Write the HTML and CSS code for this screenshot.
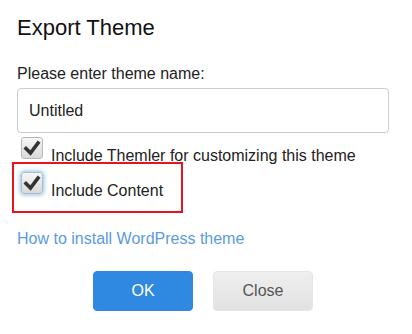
FILE: index.html
```html
<!DOCTYPE html>
<html lang="en">
<head>
    <meta charset="UTF-8">
    <title>Export Theme</title>
    <link rel="stylesheet" href="styles.css">
</head>
<body>
    <div class="dialog">
        <h2 class="title">Export Theme</h2>
        <div class="label">Please enter theme name:</div>
        <input class="name-input" type="text" value="Untitled">
        <div class="check-row">
            <span class="check">
                <svg viewBox="0 0 22 22" width="22" height="22"><path d="M5 11.5 L9.5 16 L17 6" fill="none" stroke="#333" stroke-width="3.6" stroke-linecap="square" stroke-linejoin="miter"/></svg>
            </span>
            <span class="check-text">Include Themler for customizing this theme</span>
        </div>
        <div class="check-row">
            <span class="check focused">
                <svg viewBox="0 0 22 22" width="22" height="22"><path d="M5 11.5 L9.5 16 L17 6" fill="none" stroke="#333" stroke-width="3.6" stroke-linecap="square" stroke-linejoin="miter"/></svg>
            </span>
            <span class="check-text">Include Content</span>
        </div>
        <a class="help-link" href="#">How to install WordPress theme</a>
        <div class="buttons">
            <button class="btn btn-ok">OK</button>
            <button class="btn btn-close">Close</button>
        </div>
        <div class="highlight"></div>
    </div>
</body>
</html>
```

FILE: styles.css
```css
body {
    margin: 0;
    padding: 0;
    background-color: #fff;
    font-family: "Liberation Sans", Arial, sans-serif;
    color: #222;
}
.dialog {
    position: relative;
    width: 372px;
    padding: 15px 23px 0 17px;
}
.title {
    margin: 0;
    font-size: 22px;
    font-weight: normal;
    line-height: 26px;
    color: #111;
}
.label {
    margin-top: 23px;
    font-size: 16px;
    line-height: 20px;
    color: #222;
}
.name-input {
    display: block;
    box-sizing: border-box;
    width: 372px;
    height: 45px;
    margin-top: 4px;
    padding: 0 11px;
    border: 1px solid #ccc;
    border-radius: 4px;
    font-family: "Liberation Sans", Arial, sans-serif;
    font-size: 16px;
    color: #222;
    outline: none;
}
.check-row {
    display: flex;
    align-items: flex-start;
    gap: 8px;
    margin-top: 4px;
    font-size: 16px;
    line-height: 20px;
}
.check-row + .check-row {
    margin-top: 6px;
}
.check {
    display: inline-block;
    box-sizing: border-box;
    width: 22px;
    height: 22px;
    margin-left: 4px;
    border: 1px solid #b9b9b9;
    border-radius: 3px;
    background: linear-gradient(#f6f6f6, #d9d9d9);
    position: relative;
}
.check svg {
    position: absolute;
    left: -1px;
    top: -1px;
}
.check.focused {
    box-shadow: 0 0 4px 1px #8cc3f2;
}
.check-text {
    margin-top: 9px;
    color: #222;
}
.help-link {
    display: block;
    margin-top: 28px;
    font-size: 16px;
    line-height: 20px;
    color: #5b9be0;
    text-decoration: none;
}
.buttons {
    display: flex;
    justify-content: center;
    gap: 20px;
    margin-top: 22px;
}
.btn {
    width: 100px;
    height: 40px;
    border-radius: 4px;
    font-family: "Liberation Sans", Arial, sans-serif;
    font-size: 16px;
    cursor: pointer;
}
.btn-ok {
    background-color: #2f89e0;
    border: 1px solid #2f89e0;
    color: #fff;
}
.btn-close {
    background: linear-gradient(#efefef, #e1e1e1);
    border: 1px solid #e6e6e6;
    color: #555;
}
.highlight {
    position: absolute;
    left: 12px;
    top: 162px;
    width: 171px;
    height: 51px;
    box-sizing: border-box;
    border: 2px solid #e8141c;
}
```
